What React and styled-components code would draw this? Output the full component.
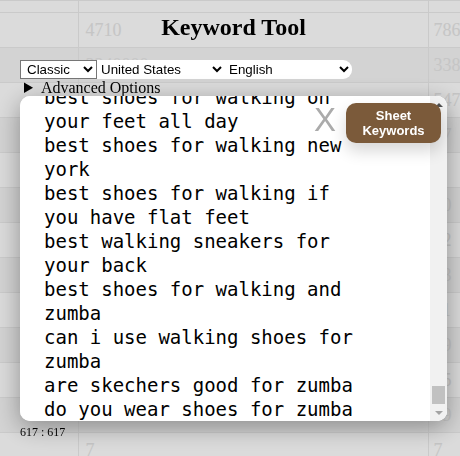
import React, { useLayoutEffect, useRef } from "react";
import styled, { createGlobalStyle } from "styled-components";

const GlobalStyle = createGlobalStyle`
  html, body {
    margin: 0;
    padding: 0;
    overflow: hidden;
    background: #ffffff;
  }
  body {
    font-family: "Liberation Serif", serif;
  }
`;

/* ---------- page behind the dialog: the results table ---------- */

const Grid = styled.table`
  border-collapse: collapse;
  table-layout: fixed;
  width: 460px;
  font: 18px "Liberation Serif", serif;
  color: #e6e6e6;
`;

const Row = styled.tr`
  background: ${(p) => (p.$shade ? "#f6f6f6" : "#ffffff")};
`;

const Cell = styled.td`
  height: ${(p) => (p.$short ? "11px" : "34px")};
  padding: 0 0 0 ${(p) => (p.$tight ? "5px" : "7px")};
  border-top: 1px solid #ececec;
  border-right: 1px solid #ececec;
  white-space: nowrap;
  overflow: hidden;
  vertical-align: middle;
`;

const tableRows = [
  ["4710", "786"],
  ["3240000", "338"],
  ["", "547"],
  ["", "17"],
  ["", ""],
  ["", "50"],
  ["", "32"],
  ["", "73"],
  ["", "11"],
  ["", "99"],
  ["", "55"],
  ["", "39"],
  ["7", "7"],
];

/* ---------- dialog ---------- */

const Backdrop = styled.div`
  position: fixed;
  inset: 0;
  background: rgba(0, 0, 0, 0.14);
`;

const Panel = styled.div`
  margin-left: 20px;
  width: 427px;
  display: flex;
  flex-direction: column;
`;

const Title = styled.h2`
  margin: 0;
  padding-top: 13px;
  text-align: center;
  font: bold 24px/28px "Liberation Serif", serif;
  color: #000;
`;

const Controls = styled.div`
  display: flex;
  margin-top: 19px;
  height: 19px;
`;

const ModeSelect = styled.select`
  box-sizing: border-box;
  width: 77px;
  height: 19px;
  margin: 0;
  padding: 0 0 0 2px;
  border: 1px solid #767676;
  border-radius: 0;
  background: #ffffff;
  color: #000;
  font: 13.33px "Liberation Sans", Arial, sans-serif;
`;

const SelectGroup = styled.div`
  display: flex;
  background: #ffffff;
  border-radius: 0 9px 9px 0;
  overflow: hidden;
`;

const PlainSelect = styled.select`
  box-sizing: border-box;
  width: ${(p) => p.$w}px;
  height: 19px;
  margin: 0;
  padding: 0;
  border: none;
  background: transparent;
  color: #000;
  font: 13.33px "Liberation Sans", Arial, sans-serif;
  outline: none;
`;

const Options = styled.details`
  font: 16px/17px "Liberation Serif", serif;
  color: #000;
  padding-left: 4px;
`;

const OptionsSummary = styled.summary`
  cursor: pointer;
`;

const EditorWrap = styled.div`
  position: relative;
  border-radius: 10px;
  box-shadow: 0 6px 24px rgba(0, 0, 0, 0.35);
  background: #ffffff;
`;

const Keywords = styled.textarea`
  display: block;
  box-sizing: border-box;
  width: 100%;
  height: 325px;
  margin: 0;
  padding: 0 83px 0 24px;
  border: none;
  border-radius: 10px;
  outline: none;
  resize: none;
  overflow-y: scroll;
  scrollbar-width: none;
  background: #ffffff;
  color: #000;
  font: 19px/24px "DejaVu Sans Mono", monospace;

  &::-webkit-scrollbar {
    display: none;
  }
`;

/* classic scrollbar drawn over the right edge of the editor */
const ScrollTrack = styled.div`
  position: absolute;
  top: 0;
  right: 0;
  bottom: 0;
  width: 17px;
  display: flex;
  flex-direction: column;
  align-items: center;
  background: #f1f1f1;
  border-radius: 0 10px 10px 0;
`;

const ScrollButton = styled.div`
  height: 17px;
  width: 17px;
  display: flex;
  align-items: center;
  justify-content: center;
`;

const Arrow = styled.span`
  width: 0;
  height: 0;
  border-left: 4px solid transparent;
  border-right: 4px solid transparent;
  ${(p) =>
    p.$down
      ? "border-top: 4px solid #a3a3a3;"
      : "border-bottom: 4px solid #505050;"}
`;

const ScrollRail = styled.div`
  flex: 1;
  width: 100%;
  display: flex;
  flex-direction: column;
  justify-content: flex-end;
  align-items: center;
`;

const ScrollThumb = styled.div`
  width: 13px;
  height: 18px;
  background: #c1c1c1;
`;

const ClearMark = styled.span`
  position: absolute;
  top: 7px;
  right: 111px;
  font: 33px/33px "Liberation Sans", Arial, sans-serif;
  color: #ababab;
  cursor: pointer;
`;

const SheetButton = styled.button`
  position: absolute;
  top: 7px;
  right: 6px;
  width: 95px;
  height: 40px;
  padding: 0;
  border: none;
  border-radius: 10px;
  background: #7b5a3a;
  color: #ffffff;
  font: bold 13px/15px "Liberation Sans", Arial, sans-serif;
  box-shadow: 0 8px 16px rgba(0, 0, 0, 0.16);
  cursor: pointer;
`;

const Counter = styled.div`
  margin-top: 4px;
  font: 12px/14px "Liberation Serif", serif;
  color: #000;
`;

const bases = [
  "walking shoes",
  "running shoes",
  "walking sneakers",
  "hiking shoes",
  "tennis shoes",
  "shoes for walking",
  "sneakers",
];
const tails = [
  "for women",
  "for men",
  "for flat feet",
  "for plantar fasciitis",
  "for nurses",
  "with arch support",
  "for standing all day",
  "for wide feet",
  "for bunions",
  "on sale",
  "for seniors",
  "for travel",
  "for knee pain",
  "for overpronation",
];

const lastKeywords = [
  "best shoes for walking on your feet all day",
  "best shoes for walking new york",
  "best shoes for walking if you have flat feet",
  "best walking sneakers for your back",
  "best shoes for walking and zumba",
  "can i use walking shoes for zumba",
  "are skechers good for zumba",
  "do you wear shoes for zumba",
];

const keywordText = [
  ...bases.flatMap((b) => tails.map((t) => `best ${b} ${t}`)),
  ...lastKeywords,
].join("\n");

export default function App() {
  const boxRef = useRef(null);

  useLayoutEffect(() => {
    const el = boxRef.current;
    if (el) el.scrollTop = el.scrollHeight;
  }, []);

  return (
    <>
      <GlobalStyle />
      <Grid>
        <colgroup>
          <col style={{ width: 78 }} />
          <col style={{ width: 350 }} />
          <col style={{ width: 32 }} />
        </colgroup>
        <tbody>
          <Row>
            <Cell $short />
            <Cell $short />
            <Cell $short />
          </Row>
          {tableRows.map(([a, b], i) => (
            <Row key={i} $shade={i % 2 === 1}>
              <Cell />
              <Cell>{a}</Cell>
              <Cell $tight>{b}</Cell>
            </Row>
          ))}
        </tbody>
      </Grid>

      <Backdrop>
        <Panel>
          <Title>Keyword Tool</Title>
          <Controls>
            <ModeSelect defaultValue="classic">
              <option value="classic">Classic</option>
              <option value="questions">Questions</option>
            </ModeSelect>
            <SelectGroup>
              <PlainSelect $w={128} defaultValue="us">
                <option value="us">United States</option>
                <option value="uk">United Kingdom</option>
              </PlainSelect>
              <PlainSelect $w={127} defaultValue="en">
                <option value="en">English</option>
                <option value="es">Spanish</option>
              </PlainSelect>
            </SelectGroup>
          </Controls>
          <Options>
            <OptionsSummary>Advanced Options</OptionsSummary>
          </Options>
          <EditorWrap>
            <Keywords ref={boxRef} defaultValue={keywordText} spellCheck={false} />
            <ScrollTrack>
              <ScrollButton>
                <Arrow />
              </ScrollButton>
              <ScrollRail>
                <ScrollThumb />
              </ScrollRail>
              <ScrollButton>
                <Arrow $down />
              </ScrollButton>
            </ScrollTrack>
            <ClearMark>X</ClearMark>
            <SheetButton>
              Sheet
              <br />
              Keywords
            </SheetButton>
          </EditorWrap>
          <Counter>617 : 617</Counter>
        </Panel>
      </Backdrop>
    </>
  );
}
